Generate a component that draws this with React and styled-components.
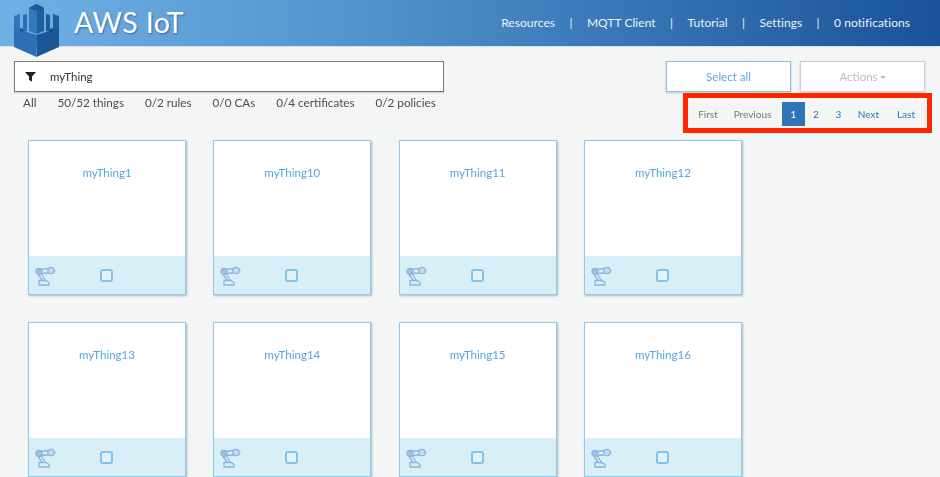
import React from 'react';
import styled, { createGlobalStyle } from 'styled-components';

const Global = createGlobalStyle`
    html, body {
        margin: 0;
        height: 100%;
        overflow: hidden;
        background-color: #f4f6f6;
        font-family: "Lato", "Open Sans", sans-serif;
    }
    * { box-sizing: border-box; }
`;

const Page = styled.div`
    width: 940px;
    height: 477px;
    overflow: hidden;
    filter: blur(0.4px);
`;

const Header = styled.header`
    height: 47px;
    display: flex;
    align-items: center;
    justify-content: space-between;
    padding: 0 30px 0 14px;
    background: linear-gradient(90deg, #70b0e4 0%, #5596d0 35%, #3b77b7 65%, #1a5398 100%);
    border-bottom: 1px solid #cfe0ee;
`;

const Brand = styled.div`
    display: flex;
    align-items: flex-start;
    gap: 15px;
    height: 47px;
`;

const Logo = styled.svg`
    width: 45px;
    height: 53px;
    margin-top: 4px;
    flex: none;
    position: relative;
    z-index: 2;
`;

const BrandName = styled.div`
    color: #fff;
    font-size: 28.5px;
    line-height: 47px;
    margin-top: -1px;
    letter-spacing: 0.4px;
    text-shadow: 1px 1px 2px rgba(0, 40, 90, 0.45);
`;

const Nav = styled.nav`
    display: flex;
    align-items: center;
    font-size: 12px;
    letter-spacing: 0.05px;
    color: #eaf2fa;
    margin-bottom: 1px;
`;

const NavItem = styled.span``;

const NavSep = styled.span`
    margin: 0 14.4px;
`;

const Toolbar = styled.div`
    display: flex;
    justify-content: space-between;
    padding: 14px 15px 0 14px;
`;

const SearchColumn = styled.div`
    width: 430px;
`;

const Search = styled.div`
    height: 31px;
    display: flex;
    align-items: center;
    gap: 14px;
    padding-left: 10px;
    background-color: #fff;
    border: 1px solid #7c7c7c;
    box-shadow: 0 1px 1px rgba(0, 0, 0, 0.15);
    font-size: 11.5px;
    color: #333;
`;

const Stats = styled.div`
    display: flex;
    gap: 21px;
    margin-top: 3px;
    padding-left: 9px;
    font-size: 11.7px;
    line-height: 15px;
    color: #4d4d4d;
`;

const RightColumn = styled.div`
    display: flex;
    flex-direction: column;
    align-items: flex-end;
`;

const Buttons = styled.div`
    display: flex;
    gap: 9px;
    height: 31px;
`;

const ActionButton = styled.div`
    width: 125px;
    height: 31px;
    display: flex;
    align-items: center;
    justify-content: center;
    gap: 2px;
    background-color: #fff;
    font-size: 11.5px;
    color: ${(p) => (p.$disabled ? '#bdbdbd' : '#55ace0')};
    border: 1px solid ${(p) => (p.$disabled ? '#cfcfcf' : '#86c3e6')};
    box-shadow: 0 1px 2px rgba(0, 0, 0, 0.2);
`;

const Caret = styled.span`
    width: 0;
    height: 0;
    margin-top: 1px;
    border-left: 3px solid transparent;
    border-right: 3px solid transparent;
    border-top: 3px solid #bdbdbd;
`;

const Pager = styled.div`
    display: flex;
    align-items: center;
    height: 40px;
    width: 249px;
    margin: 1px -7px 0 0;
    padding: 2px 0 0 5px;
    border: 5px solid #ff2600;
    font-size: 10px;
`;

const PageLink = styled.span`
    height: 24px;
    display: flex;
    align-items: center;
    justify-content: center;
    width: ${(p) => p.$w}px;
    color: ${(p) => (p.$active ? '#fff' : p.$muted ? '#777' : '#2f74b5')};
    background-color: ${(p) => (p.$active ? '#2f74b5' : 'transparent')};
`;

const Grid = styled.div`
    display: grid;
    grid-template-columns: repeat(4, 158px);
    gap: 27px;
    column-gap: 27.3px;
    padding: 7px 0 0 28px;
`;

const Card = styled.div`
    height: 155px;
    display: flex;
    flex-direction: column;
    background-color: #fff;
    border: 1px solid #8fcae6;
    box-shadow: 1px 1px 2px rgba(60, 90, 110, 0.4);
`;

const CardTitle = styled.div`
    flex: 1;
    padding-top: 25px;
    text-align: center;
    font-size: 11.5px;
    line-height: 14px;
    color: #53a7dc;
`;

const CardFooter = styled.div`
    height: 38px;
    display: flex;
    align-items: center;
    padding-left: 6px;
    background-color: #d8eff7;
`;

const Robot = styled.svg`
    width: 21px;
    height: 21px;
    flex: none;
`;

const Check = styled.span`
    width: 13px;
    height: 13px;
    margin-left: 44px;
    border: 2px solid #84c3e8;
    border-radius: 3px;
    background-color: #e3f3fa;
`;

const LogoMark = () => (
    <Logo viewBox="0 0 45 53">
        {/* left and right merlons */}
        <path d="M0 12 L6 10 V27 L0 25 Z" fill="#2f76b8" />
        <path d="M39 10 L45 12 V25 L39 27 Z" fill="#1f5c9c" />
        <path d="M9 11 L13 10 V27 L9 28 Z" fill="#2a6fb0" />
        <path d="M32 10 L36 11 V28 L32 27 Z" fill="#1f5c9c" />
        {/* center tower */}
        <path d="M15 4 L22.5 0 V30 L15 27 Z" fill="#3279bc" />
        <path d="M22.5 0 L30 4 V27 L22.5 30 Z" fill="#1f5f9f" />
        <path d="M15 4 L22.5 7 L30 4 L22.5 0 Z" fill="#1d5a99" />
        {/* body */}
        <path d="M0 24 L22.5 31 V53 L0 43 Z" fill="#2c70b3" />
        <path d="M45 24 L22.5 31 V53 L45 43 Z" fill="#1b5695" />
        <path d="M6 24 L9 25 V28 L6 27 Z M36 25 L39 24 V27 L36 28 Z" fill="#174c88" />
    </Logo>
);

const RobotIcon = () => (
    <Robot viewBox="0 0 21 21" fill="none" stroke="#8db4de" strokeWidth="1.3">
        <circle cx="4" cy="6.5" r="3" fill="#a0c0e4" />
        <circle cx="16" cy="5.5" r="3.2" fill="#c5dcf0" />
        <path d="M6 4.5 L13 3.5 M6 8.5 L13 8 M19 5.5 H20.5" />
        <path d="M3 9.5 L7 15 M6.5 9 L10 15" />
        <path d="M4 15.5 H11 L14 17.5 V20 H4 Z" />
    </Robot>
);

const stats = ['All', '50/52 things', '0/2 rules', '0/0 CAs', '0/4 certificates', '0/2 policies'];
const navItems = ['Resources', 'MQTT Client', 'Tutorial', 'Settings', '0 notifications'];
const things = ['myThing1', 'myThing10', 'myThing11', 'myThing12', 'myThing13', 'myThing14', 'myThing15', 'myThing16'];

const App = () => {
    return (
        <Page>
            <Global />
            <Header>
                <Brand>
                    <LogoMark />
                    <BrandName>AWS IoT</BrandName>
                </Brand>
                <Nav>
                    {navItems.map((item, i) => (
                        <React.Fragment key={item}>
                            {i > 0 && <NavSep>|</NavSep>}
                            <NavItem>{item}</NavItem>
                        </React.Fragment>
                    ))}
                </Nav>
            </Header>
            <Toolbar>
                <SearchColumn>
                    <Search>
                        <svg width="11" height="11" viewBox="0 0 11 11">
                            <path d="M0 1 H11 L7 5.5 V10.5 L4 9 V5.5 Z" fill="#222" />
                        </svg>
                        myThing
                    </Search>
                    <Stats>
                        {stats.map((s) => (
                            <span key={s}>{s}</span>
                        ))}
                    </Stats>
                </SearchColumn>
                <RightColumn>
                    <Buttons>
                        <ActionButton>Select all</ActionButton>
                        <ActionButton $disabled>
                            Actions<Caret />
                        </ActionButton>
                    </Buttons>
                    <Pager>
                        <PageLink $w={30} $muted>First</PageLink>
                        <PageLink $w={59} $muted>Previous</PageLink>
                        <PageLink $w={23} $active>1</PageLink>
                        <PageLink $w={22}>2</PageLink>
                        <PageLink $w={23}>3</PageLink>
                        <PageLink $w={37}>Next</PageLink>
                        <PageLink $w={38}>Last</PageLink>
                    </Pager>
                </RightColumn>
            </Toolbar>
            <Grid>
                {things.map((t) => (
                    <Card key={t}>
                        <CardTitle>{t}</CardTitle>
                        <CardFooter>
                            <RobotIcon />
                            <Check />
                        </CardFooter>
                    </Card>
                ))}
            </Grid>
        </Page>
    );
};

export default App;
